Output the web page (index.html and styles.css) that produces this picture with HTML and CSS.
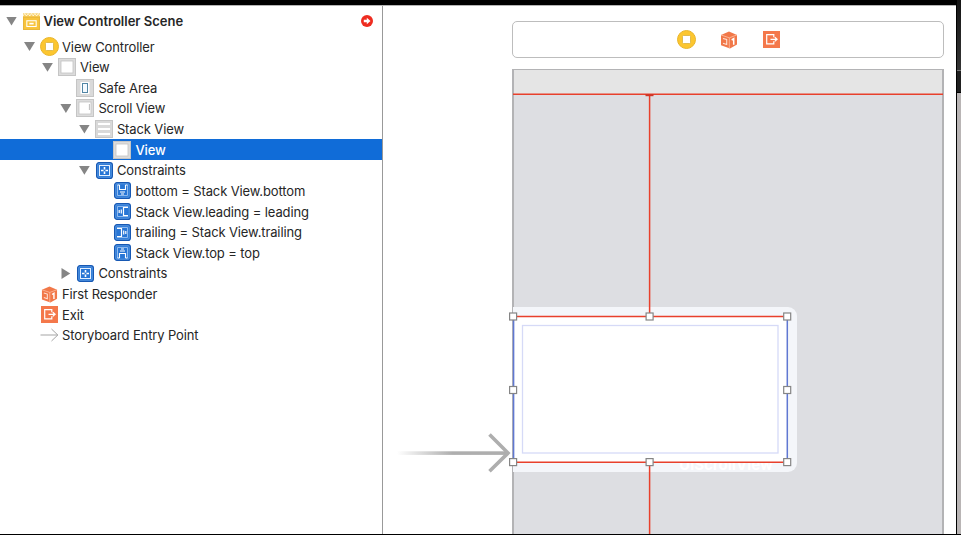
FILE: index.html
```html
<!DOCTYPE html>
<html lang="en">
<head>
<meta charset="utf-8">
<title>Storyboard</title>
<link rel="stylesheet" href="styles.css">
</head>
<body>
<svg width="0" height="0" class="defs" aria-hidden="true">
  <defs>
    <linearGradient id="fade"><stop offset="0" stop-color="#aeaeae" stop-opacity="0"/><stop offset=".5" stop-color="#aeaeae"/></linearGradient>
    <symbol id="vc" viewBox="0 0 19 19"><circle cx="9.5" cy="9.5" r="9" fill="#fcc62f" stroke="#e9b52a"/><rect x="5.500" y="5.500" width="8" height="8" rx="1" fill="#fff" stroke="#d8b13c" stroke-width=".8"/></symbol>
    <symbol id="scene" viewBox="0 0 16 16"><path d="M0 2h16v14H0z" fill="#f8c43c"/><path d="M0 .3h16v3.200H0z" fill="#f8cf62"/><path d="M0 2.800L1.600.5l1.600 2.300L4.800.5l1.600 2.300L8 .5l1.600 2.300 1.600-2.300 1.600 2.300L14.400.5 16 2.800" fill="none" stroke="#fff" stroke-width=".7"/><path d="M.5 4v11.500h15V4z" fill="none" stroke="#e8b63c"/><rect x="3.600" y="7.300" width="8.800" height="5.400" fill="none" stroke="#fff"/><rect x="6" y="9.200" width="4" height="1.600" fill="#fff"/></symbol>
    <symbol id="view" viewBox="0 0 18 18"><rect width="18" height="18" fill="#c5c5c5"/><rect x="1" y="1" width="16" height="16" fill="#dcdcdc"/><rect x="3" y="3" width="12" height="12" fill="#fff" stroke="#c2c2c2" stroke-width=".8"/></symbol>
    <symbol id="safe" viewBox="0 0 18 18"><rect x=".5" y=".5" width="17" height="17" fill="#d9d9d9" stroke="#c5c5c5"/><rect x="4.500" y="3" width="9" height="12" fill="#fff"/><rect x="6.500" y="4.500" width="5" height="9" fill="#f4faff" stroke="#5286a5"/></symbol>
    <symbol id="scroll" viewBox="0 0 18 18"><use href="#view"/><path d="M13.400 5v6" stroke="#bcbcbc"/></symbol>
    <symbol id="stack" viewBox="0 0 18 18"><rect x=".5" y=".5" width="17" height="17" fill="#d9d9d9" stroke="#c5c5c5"/><path d="M2.500 2.500h13v3h-13zM2.500 7.500h13v3h-13zM2.500 12.500h13v3h-13z" fill="#fff" stroke="#c6c6c6" stroke-width=".5"/></symbol>
    <symbol id="blue" viewBox="0 0 17 17"><rect x=".6" y=".6" width="15.800" height="15.800" rx="2.500" fill="#2876d5" stroke="#1758b3" stroke-width="1.200"/><rect x="1.800" y="1.800" width="13.400" height="13.400" rx="1" fill="none" stroke="#75adea" stroke-width=".6"/></symbol>
    <symbol id="cons" viewBox="0 0 17 17"><use href="#blue"/><rect x="3.500" y="3.500" width="10" height="10" fill="none" stroke="#e4efff"/><path d="M8.500 5v2.500M8.500 9.500V12M5 8.500h2.500M9.500 8.500H12" stroke="#fff" stroke-width="1.600"/></symbol>
    <symbol id="bottom" viewBox="0 0 17 17"><use href="#blue"/><path d="M3.500 3v10.500h10V3" fill="none" stroke="#a9cbf5" stroke-width=".8"/><path d="M5.500 3v4.500h6V3M3.500 3h2M11.500 3h2M6 10h5M7 12h3" fill="none" stroke="#fff" stroke-width="1.100"/></symbol>
    <symbol id="leading" viewBox="0 0 17 17"><use href="#blue"/><path d="M14 3.500H3.500v10H14" fill="none" stroke="#a9cbf5" stroke-width=".8"/><path d="M14 4.500H9.500v8H14M5.200 7v3M7.300 6.500v4" fill="none" stroke="#fff" stroke-width="1.200"/></symbol>
    <symbol id="trailing" viewBox="0 0 17 17"><use href="#blue"/><path d="M3 3.500h10.500v10H3" fill="none" stroke="#a9cbf5" stroke-width=".8"/><path d="M3 4.500h4.500v8H3M9.700 6.500v4M11.800 7v3" fill="none" stroke="#fff" stroke-width="1.200"/></symbol>
    <symbol id="top" viewBox="0 0 17 17"><use href="#blue"/><path d="M3.500 14V3.500h10V14" fill="none" stroke="#a9cbf5" stroke-width=".8"/><path d="M5.500 14V9.500h6V14M3.500 14h2M11.500 14h2M7 5h3M6 7h5" fill="none" stroke="#fff" stroke-width="1.100"/></symbol>
    <symbol id="cube" viewBox="0 0 18 18"><path d="M9 .5l8 3.400v9.600L10 17.500 1 14.200V4z" fill="#f17849"/><path d="M1 4l8.300 2.800L17 3.900M9.300 6.800v10.500" fill="none" stroke="#ffc0a5" stroke-width=".8"/><path d="M3 7.500l3.700 1v5L3 12.300" fill="none" stroke="#ffe1d4" stroke-width="1.100"/><path d="M11.700 9l2-1.300v6" fill="none" stroke="#fff" stroke-width="1.500"/></symbol>
    <symbol id="exit" viewBox="0 0 17 17"><rect width="17" height="17" fill="#f4784b"/><path d="M10.800 6.200V3.600H3.700v9.200h7.100v-2.500M7.500 8.300h6.300M11.800 6.200l2.300 2.100-2.300 2.100" fill="none" stroke="#fff" stroke-width="1.200"/></symbol>
    <symbol id="entry" viewBox="0 0 19 14"><path d="M.5 7h17.500M11.500 1l6.300 6-6.300 6" fill="none" stroke="#a5a5a5"/></symbol>
  </defs>
</svg>
<div class="screen">
  <div class="window">
    <div class="titlebar"></div>
    <div class="panes">
      <nav class="outline">
        <div class="row scene"><i class="tri"></i><svg class="i16"><use href="#scene"/></svg><span>View Controller Scene</span>
          <svg class="alert" viewBox="0 0 12 12"><circle cx="6" cy="6" r="6" fill="#ee2c20"/><path d="M2.800 4.800h3V2.800L9.500 6 5.800 9.200v-2h-3z" fill="#fff"/></svg></div>
        <div class="row l1"><i class="tri"></i><svg class="i19"><use href="#vc"/></svg><span>View Controller</span></div>
        <div class="row l2"><i class="tri"></i><svg class="i18"><use href="#view"/></svg><span>View</span></div>
        <div class="row l3"><i class="gap"></i><svg class="i18"><use href="#safe"/></svg><span>Safe Area</span></div>
        <div class="row l3"><i class="tri"></i><svg class="i18"><use href="#scroll"/></svg><span>Scroll View</span></div>
        <div class="row l4"><i class="tri"></i><svg class="i18"><use href="#stack"/></svg><span>Stack View</span></div>
        <div class="row l5 selected"><i class="gap"></i><svg class="i18"><use href="#view"/></svg><span>View</span></div>
        <div class="row l4"><i class="tri"></i><svg class="i17"><use href="#cons"/></svg><span>Constraints</span></div>
        <div class="row l5"><i class="gap"></i><svg class="i17"><use href="#bottom"/></svg><span>bottom = Stack View.bottom</span></div>
        <div class="row l5"><i class="gap"></i><svg class="i17"><use href="#leading"/></svg><span>Stack View.leading = leading</span></div>
        <div class="row l5"><i class="gap"></i><svg class="i17"><use href="#trailing"/></svg><span>trailing = Stack View.trailing</span></div>
        <div class="row l5"><i class="gap"></i><svg class="i17"><use href="#top"/></svg><span>Stack View.top = top</span></div>
        <div class="row l3"><i class="tri closed"></i><svg class="i17"><use href="#cons"/></svg><span>Constraints</span></div>
        <div class="row l1"><i class="gap"></i><svg class="i17"><use href="#cube"/></svg><span>First Responder</span></div>
        <div class="row l1"><i class="gap"></i><svg class="i17"><use href="#exit"/></svg><span>Exit</span></div>
        <div class="row l1"><i class="gap"></i><svg class="entry"><use href="#entry"/></svg><span>Storyboard Entry Point</span></div>
      </nav>
      <main class="canvas">
        <div class="dock"><svg class="i19"><use href="#vc"/></svg><svg class="i18"><use href="#cube"/></svg><svg class="i16"><use href="#exit"/></svg></div>
        <div class="device"><div class="status"></div></div>
        <div class="glow"><span>UIScrollView</span></div>
        <svg class="overlay" viewBox="383 6 573 528">
          <rect x="513" y="316" width="274" height="146" fill="#fff"/>
          <rect x="397" y="451.300" width="111" height="3.600" fill="url(#fade)"/>
          <path d="M489.500 434.500l18.500 18.600-18.500 18.200" fill="none" stroke="#aeaeae" stroke-width="3.600"/>
          <path d="M649.600 94v222M649.600 462v72M513 316.500h274M513 462.300h274M513 94.200h430" fill="none" stroke="#e8402c" stroke-width="1.500"/>
          <path d="M645.500 95.200h8" stroke="#cf3527" stroke-width="2"/>
          <path d="M513.600 316v146M787.300 316v146" stroke="#6078d2" stroke-width="1.500"/>
          <rect x="522.500" y="325.500" width="255.500" height="127.500" fill="none" stroke="#d6daf7" stroke-width="1.300"/>
          <g fill="#fff" stroke="#858585" stroke-width="1.200">
            <rect x="509.600" y="313" width="7" height="7"/><rect x="646.100" y="313" width="7" height="7"/><rect x="783.700" y="313" width="7" height="7"/>
            <rect x="509.600" y="386.500" width="7" height="7"/><rect x="783.700" y="386.500" width="7" height="7"/>
            <rect x="509.600" y="458.600" width="7" height="7"/><rect x="646.100" y="458.600" width="7" height="7"/><rect x="783.700" y="458.600" width="7" height="7"/>
          </g>
        </svg>
      </main>
    </div>
  </div>
  <aside class="behind"><div class="behind-title"></div><div class="behind-bar"></div></aside>
</div>
</body>
</html>
```
FILE: styles.css
```css
* { box-sizing: border-box; }
body { margin: 0; overflow: hidden; background: #fff; font-family: Inter, "Liberation Sans", sans-serif; font-size: 13px; color: #262626; }
svg { display: block; flex: none; }
.defs { position: absolute; }
.screen { display: flex; width: 961px; height: 535px; border-bottom: 1px solid #000; }
.window { width: 957px; border-right: 1px solid #000; display: flex; flex-direction: column; }
.titlebar { height: 6px; background: #000; border-bottom: 1px solid #b5b5b5; }
.panes { flex: 1; display: flex; min-height: 0; }
.outline { width: 383px; border-right: 1px solid #999; padding-top: 5px; }
.row { height: 20.64px; display: flex; align-items: center; white-space: nowrap; letter-spacing: -0.12px; }
.row span { margin-left: 4px; }
.row.scene { font-weight: 600; padding-left: 6px; height: 20px; margin-bottom: 5.3px; letter-spacing: 0; }
.row.scene span { margin-left: 3.5px; }
.row.scene .i16 { margin-left: 1px; }
.scene .alert { width: 12px; height: 12px; margin: 0 9px 0 auto; }
.l1 { padding-left: 24px; }
.l2 { padding-left: 42px; }
.l3 { padding-left: 60.4px; }
.l4 { padding-left: 78.9px; }
.l5 { padding-left: 97.4px; }
.selected { background: #106cd8; color: #fff; font-weight: 500; }
.tri { flex: none; width: 11px; height: 9px; background: #858585; clip-path: polygon(0 0, 100% 0, 50% 100%); margin-right: 5px; }
.tri.closed { clip-path: polygon(10% 0, 90% 50%, 10% 100%); height: 11px; }
.gap { flex: none; width: 16px; }
.i16 { width: 17px; height: 17px; }
.i17 { width: 17px; height: 17px; margin-left: 1px; }
.i18 { width: 18px; height: 18px; }
.i19 { width: 19px; height: 19px; }
.entry { width: 19px; height: 14px; margin-right: -1px; }
.row .i19 + span { margin-left: 3px; }
.canvas { position: relative; flex: 1; display: flex; flex-direction: column; padding: 15px 12px 0 129px; min-width: 0; }
.dock { flex: none; height: 37px; border: 1px solid #bdbdbd; border-radius: 5px; display: flex; align-items: center; justify-content: center; gap: 25px; margin-bottom: 11px; }
.dock .i18 { margin-left: -1px; }
.device { flex: 1; background: #dddee2; border: 2px solid #b3b3b5; border-bottom: 0; border-top-width: 1px; }
.status { height: 24px; background: #e5e5e5; }
.glow { position: absolute; left: 130px; top: 301px; width: 284px; height: 165px; border-radius: 0 9px 9px 0; background: #f4f6fa; }
.glow span { position: absolute; left: 166px; top: 149px; font-size: 15px; line-height: 18px; font-weight: 700; color: #fff; }
.overlay { position: absolute; left: 0; top: 0; width: 573px; height: 528px; }
.behind { flex: 1; background: #b9b5b5; }
.behind-title { height: 71px; background: linear-gradient(#151515, #353535); border-bottom: 1px solid #777; }
.behind-bar { height: 22px; background: #202020; border-bottom: 1px solid #000; }
```
